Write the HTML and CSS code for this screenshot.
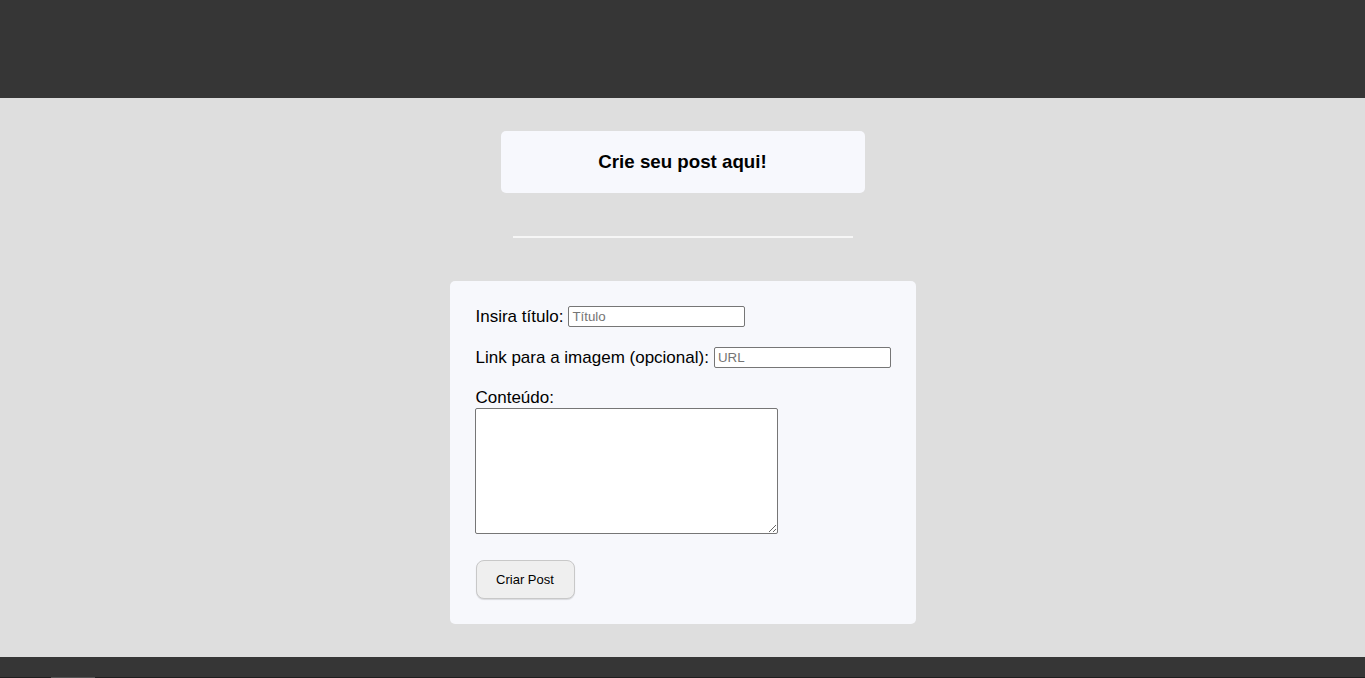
FILE: index.html
```html
<!DOCTYPE html>
<html lang="pt-BR">
<head>
<meta charset="utf-8">
<title>Criar Post</title>
<link rel="stylesheet" href="styles.css">
</head>
<body>
<header class="topbar"></header>
<main class="main">
  <div class="title-box"><h3 class="title">Crie seu post aqui!</h3></div>
  <hr class="divider">
  <form class="card">
    <div class="row">
      <label class="label" for="t">Insira título:</label>
      <input class="field field-title" id="t" type="text" placeholder="Título">
    </div>
    <div class="row">
      <label class="label" for="u">Link para a imagem (opcional):</label>
      <input class="field field-url" id="u" type="text" placeholder="URL">
    </div>
    <label class="label label-block" for="c">Conteúdo:</label>
    <textarea class="content" id="c"></textarea>
    <button class="btn" type="button">Criar Post</button>
  </form>
</main>
<footer class="footer"><div class="footer-line"><span class="footer-tab"></span></div></footer>
</body>
</html>
```
FILE: styles.css
```css
html, body {
  margin: 0;
  padding: 0;
}
body {
  background: #dedede;
  font-family: "Liberation Sans", Arial, sans-serif;
  color: #000;
}
.topbar {
  height: 98px;
  background: #363636;
}
.main {
  display: flex;
  flex-direction: column;
  align-items: center;
  padding: 33px 0 33px;
}
.title-box {
  width: 364px;
  height: 62px;
  background: #f7f8fd;
  border-radius: 5px;
  display: flex;
  align-items: center;
  justify-content: center;
}
.title {
  margin: 0;
  font-size: 18.72px;
  font-weight: bold;
}
.divider {
  width: 340px;
  height: 0;
  border: none;
  border-top: 2px solid #f6f6f6;
  margin: 43px 0 43px;
}
.card {
  width: 415px;
  background: #f7f8fc;
  border-radius: 5px;
  padding: 25px 25px 25px 26px;
  display: flex;
  flex-direction: column;
  align-items: flex-start;
}
.row {
  display: flex;
  align-items: center;
  gap: 5px;
  height: 21px;
  margin-bottom: 20px;
  white-space: nowrap;
}
.label {
  font-size: 17px;
  line-height: 20px;
  flex-shrink: 0;
  white-space: nowrap;
}
.label-block {
  display: block;
}
.field {
  box-sizing: border-box;
  flex-shrink: 0;
  height: 21px;
  border: 1px solid #767676;
  border-radius: 2px;
  padding: 1px 3px;
  font-family: "Liberation Sans", Arial, sans-serif;
  font-size: 13.33px;
  background: #fff;
}
.field::placeholder {
  color: #757575;
}
.field-title {
  width: 177px;
}
.field-url {
  width: 177px;
}
.content {
  box-sizing: border-box;
  width: 303px;
  height: 126px;
  border: 1px solid #767676;
  border-radius: 2px;
  background: #fff;
  margin: 0 0 0 -1px;
}
.btn {
  margin-top: 26px;
  margin-left: 0;
  width: 99px;
  height: 39px;
  background: #efefef;
  border: 1px solid #c8c8c8;
  border-radius: 8px;
  box-shadow: 0 1px 1px rgba(0,0,0,0.12);
  font-family: "Liberation Sans", Arial, sans-serif;
  font-size: 13px;
  color: #000;
}
.footer {
  background: #363636;
  height: 60px;
}
.footer-line {
  height: 20px;
  border-bottom: 1px solid #1f1f1f;
  position: relative;
}
.footer-tab {
  position: absolute;
  left: 51px;
  bottom: -2px;
  width: 44px;
  height: 2px;
  background: #555;
}
```
